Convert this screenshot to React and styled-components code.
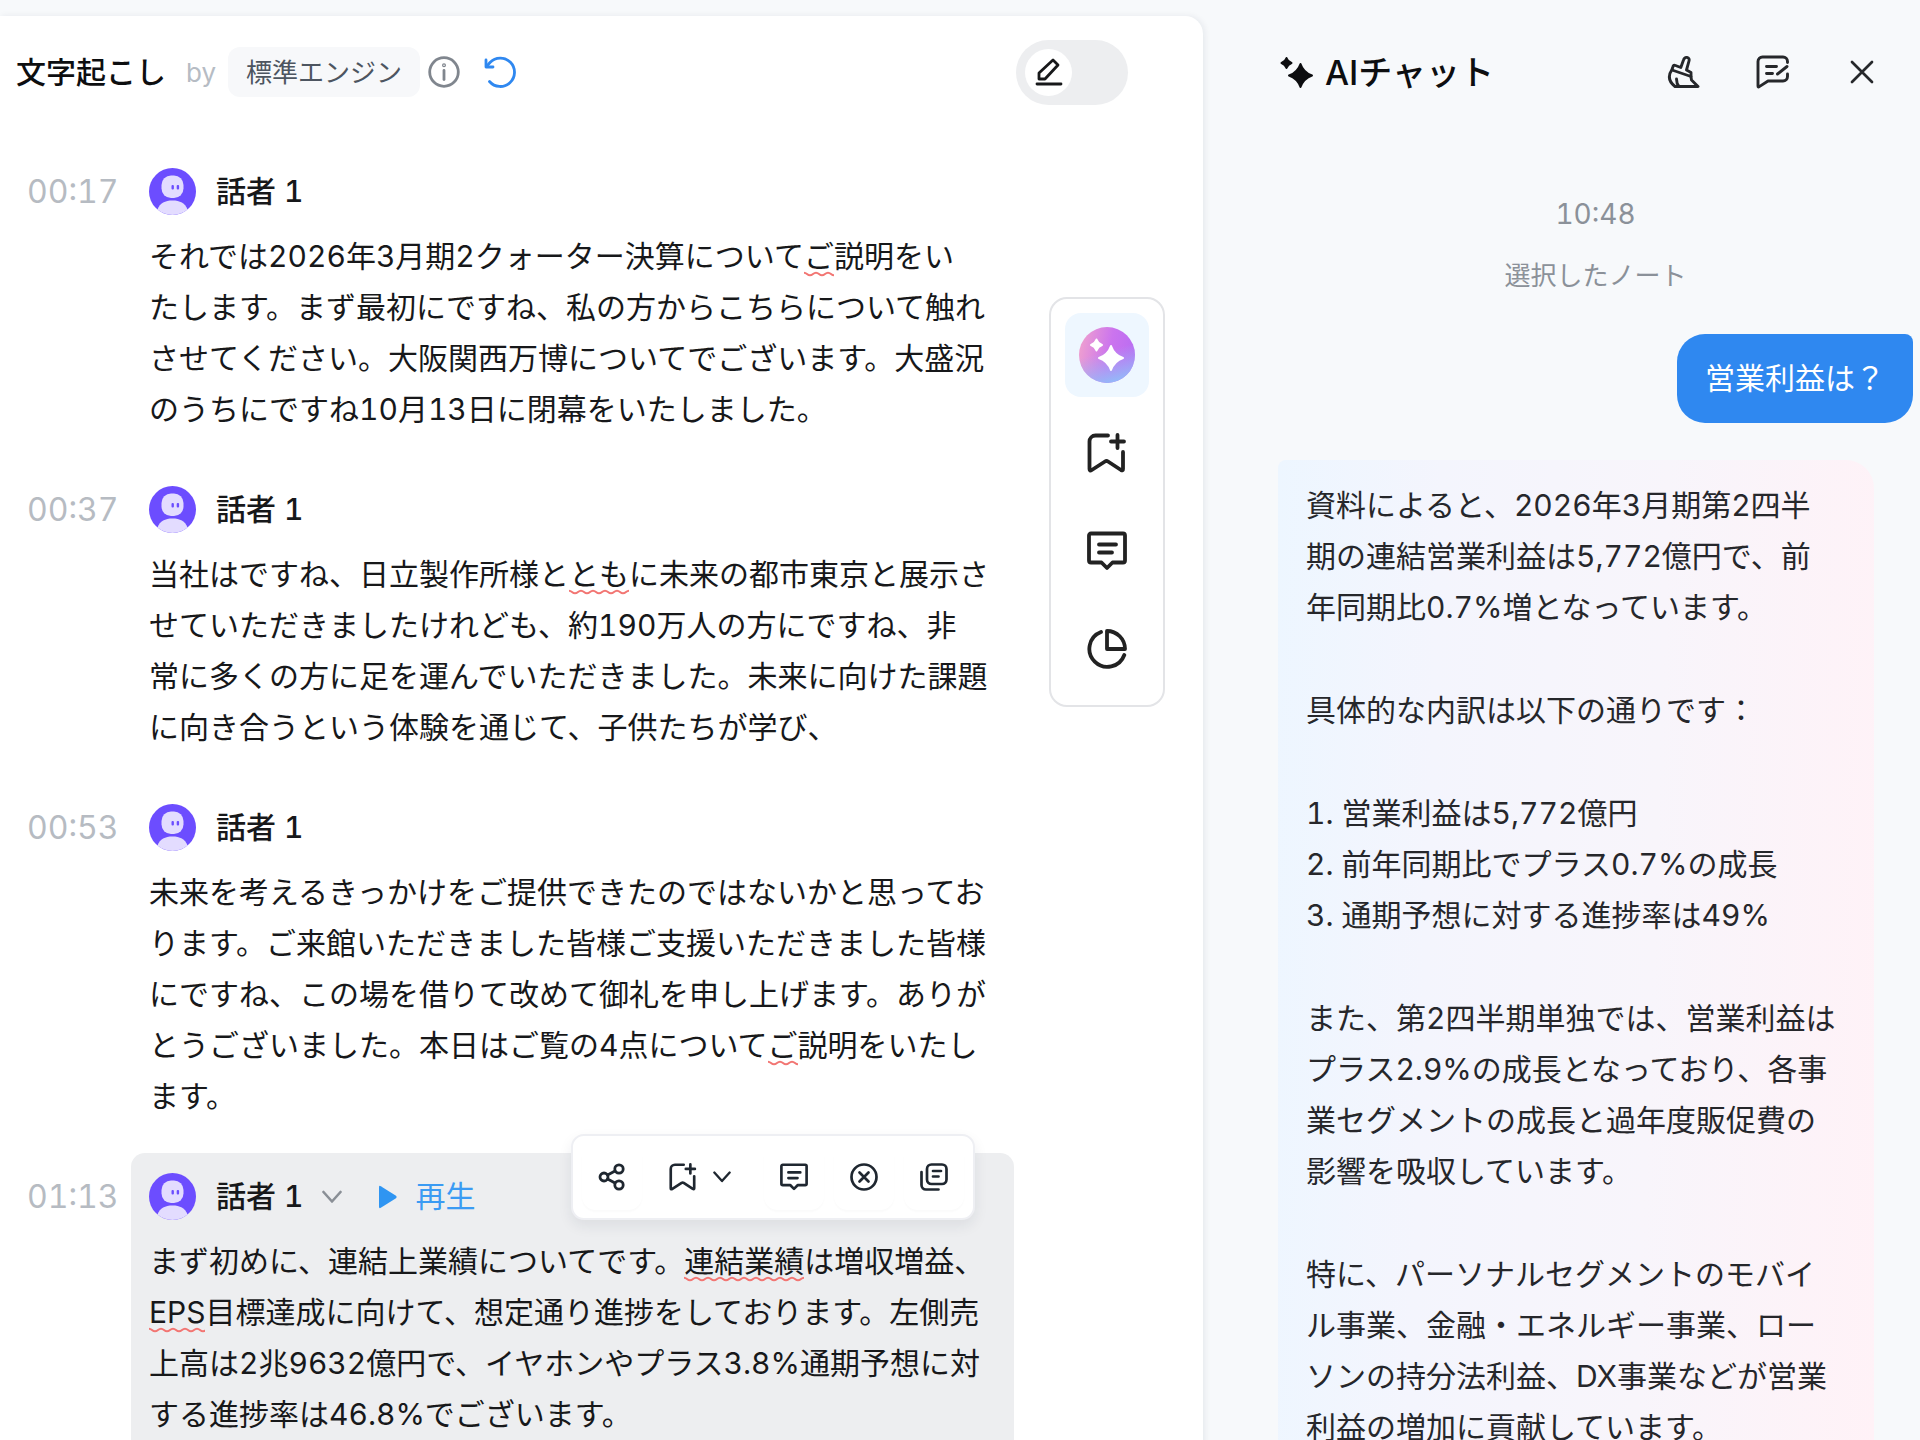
import React from "react";
import styled, { createGlobalStyle, css } from "styled-components";

const GlobalStyle = createGlobalStyle`
  *,
  *::before,
  *::after {
    box-sizing: border-box;
  }
  body {
    margin: 0;
    background: #f7f9fb;
    color: #17181a;
    font-family: Inter, "Noto Sans CJK JP", sans-serif;
    font-size: 30px;
    font-variant-numeric: tabular-nums;
    line-height: 51px;
  }
  h2,
  h3,
  p,
  ol {
    margin: 0;
    padding: 0;
  }
  button {
    display: inline-flex;
    align-items: center;
    justify-content: center;
    padding: 0;
    border: 0;
    background: none;
    color: inherit;
    font: inherit;
    cursor: pointer;
  }
  svg {
    display: block;
    flex: none;
  }
`;

const Page = styled.div`
  display: grid;
  grid-template-columns: minmax(0, 1203fr) minmax(0, 717fr);
  height: 100vh;
  overflow: hidden;
`;

/* ---------- transcript ---------- */

const Transcript = styled.main`
  margin-top: 16px;
  background: #fff;
  border-top-right-radius: 18px;
  box-shadow: 2px 0 6px rgba(20, 30, 50, 0.07);
`;

const TranscriptHeader = styled.header`
  display: flex;
  align-items: center;
  height: 112px;
  padding: 0 75px 0 16px;
`;

const Title = styled.h2`
  font-size: ${({ $large }) => ($large ? 34 : 30)}px;
  font-weight: 500;
  color: #0d0e10;
`;

const By = styled.span`
  margin: 0 12px 0 20px;
  font-size: 26px;
  color: #b6bcc4;
`;

const EngineChip = styled.button`
  && {
    height: 50px;
    padding: 0 18px;
    border-radius: 12px;
    background: #f7f8fa;
    color: #4d5560;
    font-size: 26px;
  }
`;

const HeaderIcon = styled.button`
  && {
    margin-left: ${({ $gap }) => $gap}px;
    color: ${({ $color }) => $color};
  }
`;

const EditSwitch = styled.label`
  display: flex;
  align-items: center;
  width: 112px;
  height: 65px;
  margin-left: auto;
  padding: 9px;
  border-radius: 33px;
  background: #edeef0;
  cursor: pointer;

  input {
    position: absolute;
    opacity: 0;
  }
  input:checked + span {
    margin-left: auto;
  }
`;

const Knob = styled.span`
  display: flex;
  align-items: center;
  justify-content: center;
  width: 47px;
  height: 47px;
  border-radius: 50%;
  background: #fff;
`;

const TranscriptBody = styled.div`
  display: flex;
  align-items: flex-start;
  justify-content: space-between;
  padding: 20px 38px 0 27px;
`;

const Segments = styled.div`
  display: flex;
  flex-direction: column;
  gap: 11px;
  flex: 0 1 987px;
`;

const SegmentRow = styled.article`
  display: flex;
`;

const Time = styled.time`
  flex: 0 0 104px;
  padding-top: 20px;
  font-size: 32px;
  line-height: 48px;
  color: #b6bbc2;
`;

const SegmentCard = styled.div`
  position: relative;
  flex: 1;
  min-width: 0;
  padding: 20px 0 20px 18px;
  border-radius: 14px;
  background: ${({ $active }) => ($active ? "#edeef0" : "transparent")};
`;

const SpeakerLine = styled.div`
  display: flex;
  align-items: center;
  height: 47px;
  margin-bottom: 16px;
`;

const Speaker = styled.h3`
  margin-left: 20px;
  font-size: 30px;
  font-weight: 500;
`;

const SpeakerMenu = styled.button`
  && {
    margin-left: 18px;
    color: #8a8f96;
  }
`;

const PlayButton = styled.button`
  && {
    gap: 18px;
    margin-left: 36px;
    color: #3b9bf3;
  }
`;

const SpeechLine = styled.span`
  display: block;
  white-space: pre;
`;

const Flagged = styled.mark`
  padding-bottom: 3px;
  color: inherit;
  background: url("data:image/svg+xml,%3Csvg xmlns='http://www.w3.org/2000/svg' width='12' height='6'%3E%3Cpath d='M-3 3Q0 0.500 3 3T9 3T15 3' fill='none' stroke='%23f27673' stroke-width='2'/%3E%3C/svg%3E")
    left bottom / 12px 6px repeat-x;
`;

const SegmentTools = styled.div`
  position: absolute;
  top: -19px;
  right: 39px;
  display: flex;
  gap: 10px;
  padding: 8px 9px;
  border: 2px solid #eeeff3;
  border-radius: 13px;
  background: #fff;
  color: #1f2730;
  box-shadow: 0 6px 14px rgba(30, 40, 60, 0.08);
`;

const ToolButton = styled.button`
  && {
    gap: 16px;
    width: ${({ $wide }) => ($wide ? 102 : 60)}px;
    height: 66px;
    border-radius: 14px;
    ${({ $wide }) =>
      $wide
        ? css`
            justify-content: flex-start;
            padding-left: 17px;
          `
        : css`
            box-shadow: 0 2px 2px rgba(0, 0, 0, 0.02);
          `}
  }
`;

const Rail = styled.nav`
  display: flex;
  flex-direction: column;
  gap: 14px;
  margin-top: 149px;
  padding: 14px;
  border: 2px solid #e3e4e7;
  border-radius: 18px;
  background: #fff;
`;

const RailButton = styled.button`
  && {
    width: 84px;
    height: 84px;
    border-radius: 16px;
    color: #222;
    background: ${({ $active }) => ($active ? "#eef7ff" : "transparent")};
  }
`;

/* ---------- chat ---------- */

const Chat = styled.aside`
  min-width: 0;
`;

const ChatHeader = styled.header`
  display: flex;
  align-items: center;
  gap: 11px;
  height: 128px;
  padding: 16px 36px 0 77px;
`;

const ChatActions = styled.div`
  display: flex;
  gap: 45px;
  margin-left: auto;
  color: #26282b;

  button {
    width: 44px;
    height: 44px;
  }
`;

const ChatBody = styled.div`
  display: flex;
  flex-direction: column;
  padding: 61px 7px 0 75px;
`;

const Meta = styled.p`
  margin-bottom: 10px;
  text-align: center;
  font-size: ${({ $size }) => $size}px;
  color: #8b9199;
`;

const Question = styled.p`
  align-self: flex-end;
  margin-top: 23px;
  padding: 19px 28px;
  border-radius: 28px 8px 28px 28px;
  background: #2f88f0;
  color: #fff;
`;

const Answer = styled.div`
  display: flex;
  flex-direction: column;
  gap: 52px;
  margin: 37px 39px 0 0;
  padding: 20px 28px;
  border-radius: 8px 28px 28px 28px;
  background: linear-gradient(92deg, #edf6ff 0%, #f4f5fd 26%, #f8f5fb 62%, #fff2f7 100%);
  color: #26272b;
  white-space: pre;
`;

const AnswerList = styled.ol`
  list-style: none;
`;

/* ---------- icons ---------- */

const Icon = ({ size, box = 24, width = 2, children }) => (
  <svg
    width={size}
    height={size}
    viewBox={`0 0 ${box} ${box}`}
    fill="none"
    stroke="currentColor"
    strokeWidth={width}
    strokeLinecap="round"
    strokeLinejoin="round"
    aria-hidden="true"
  >
    {children}
  </svg>
);

const InfoIcon = () => (
  <Icon size={32} box={32} width={2.8}>
    <circle cx="16" cy="16" r="14.300" />
    <path d="M16 14.500v9" />
    <circle cx="16" cy="9.200" r="0.600" />
  </Icon>
);

const RedoIcon = () => (
  <Icon size={32} box={32} width={2.8}>
    <path d="M2 4v7h7" />
    <path d="M2.500 10.500L6 6.500A14.200 14.200 0 1 1 5.500 25.500" />
  </Icon>
);

const PencilIcon = () => (
  <Icon size={30} box={30} width={2.8}>
    <path d="M19 3l5 5-13 14H5v-6z" />
    <path d="M3 27h24" />
  </Icon>
);

const BookmarkPlusIcon = ({ size, width }) => (
  <Icon size={size} box={40} width={width}>
    <path d="M21 2.500H8.500a6 6 0 0 0-6 6V36q0 2.500 2.300 1L18 28.500q1.500-1 3 0L34 37q2 1.200 2-1V19" />
    <path d="M30.500 2v13M24 8.500h13" />
  </Icon>
);

const CommentIcon = ({ size, width }) => (
  <Icon size={size} box={40} width={width}>
    <path d="M4 2.500h32a2 2 0 0 1 2 2v25a2 2 0 0 1-2 2H25.500L20 37l-5.500-5.500H4a2 2 0 0 1-2-2v-25a2 2 0 0 1 2-2z" />
    <path d="M12 13.500h17M12 21.500h13" />
  </Icon>
);

const PieIcon = () => (
  <Icon size={42} box={42} width={3.8}>
    <path d="M21 3v18h18A18 18 0 0 0 21 3z" />
    <path d="M15 4A18 18 0 1 0 38.300 27" />
  </Icon>
);

const ChevronDown = ({ size = 20 }) => (
  <svg
    width={size}
    height={14}
    viewBox="0 0 20 14"
    fill="none"
    stroke="currentColor"
    strokeWidth="2.600"
    strokeLinecap="round"
    strokeLinejoin="round"
    aria-hidden="true"
  >
    <path d="M1.500 2L10 11.500 18.500 2" />
  </svg>
);

const PlayIcon = () => (
  <svg width="20" height="24" viewBox="0 0 20 24" fill="#2f95f2" aria-hidden="true">
    <path d="M1 2.200Q1 0.200 2.800 1.200L18 10.800q1.500 1.200 0 2.400L2.800 22.800Q1 23.800 1 21.800z" />
  </svg>
);

const ShareIcon = () => (
  <Icon size={28} box={28} width={2.8}>
    <circle cx="6" cy="14" r="4" />
    <circle cx="21" cy="6" r="4.200" />
    <circle cx="21" cy="22" r="4.200" />
    <path d="M9.600 12L17 8M9.600 16L17 20" />
  </Icon>
);

const CircleCloseIcon = () => (
  <Icon size={28} box={28} width={2.7}>
    <circle cx="14" cy="14" r="12.500" />
    <path d="M9.500 9.500l9 9M18.500 9.500l-9 9" />
  </Icon>
);

const CopyIcon = () => (
  <Icon size={28} box={28} width={2.7}>
    <rect x="7" y="1.500" width="19.500" height="19.500" rx="4.500" />
    <path d="M1.500 9v13a4.500 4.500 0 0 0 4.500 4.500h12.500" />
    <path d="M13 8h8M13 13.500h5.500" />
  </Icon>
);

const BroomIcon = () => (
  <Icon size={34} box={34} width={2.9}>
    <path d="M13.800 12.500L16.500 5q1-3 3.500-2.600 2.800.6 2 3.600L19.500 15l4.500 2.500v4.500l.5 3L31 31.500H8Q-1.500 24 5 14.500l1-3Q6.500 9.800 8.500 10.500z" />
    <path d="M5 15l19 6.500" />
    <path d="M9.500 24q0 4.500 2.500 7.500" />
  </Icon>
);

const NoteIcon = () => (
  <Icon size={34} box={34} width={2.9}>
    <path d="M31.500 7.500V6.500a4.500 4.500 0 0 0-4.500-4.500H6.500A4.500 4.500 0 0 0 2 6.500V31q0 1.500 1.300.6L12 26h15a4.500 4.500 0 0 0 4.500-4.500V19" />
    <path d="M10.500 11.500h10M10.500 18.500h6M21.500 19L31 11.500" />
  </Icon>
);

const CloseIcon = () => (
  <Icon size={24} box={24} width={2.7}>
    <path d="M2 2l20 20M22 2L2 22" />
  </Icon>
);

const star = (cx, cy, r) => {
  const k = r * 0.26;
  return `M${cx} ${cy - r}Q${cx + k} ${cy - k} ${cx + r} ${cy}Q${cx + k} ${cy + k} ${cx} ${cy + r}Q${cx - k} ${cy + k} ${cx - r} ${cy}Q${cx - k} ${cy - k} ${cx} ${cy - r}z`;
};

const SparkleIcon = () => (
  <svg width="34" height="34" viewBox="0 0 34 34" fill="#0d0e10" stroke="#0d0e10" strokeWidth="2" strokeLinejoin="round" aria-hidden="true">
    <path d={star(20.5, 20.5, 11.5)} />
    <path d={star(6.5, 8, 5)} />
  </svg>
);

const AiBadge = () => (
  <svg width="56" height="56" viewBox="0 0 56 56" aria-hidden="true">
    <defs>
      <linearGradient id="badge-base" x1="0" y1="0.300" x2="1" y2="0.500">
        <stop offset="0" stopColor="#efa0cf" />
        <stop offset="0.550" stopColor="#cb74ee" />
        <stop offset="1" stopColor="#b96cf2" />
      </linearGradient>
      <linearGradient id="badge-glow" x1="0.400" y1="0.300" x2="0.600" y2="1">
        <stop offset="0.200" stopColor="#9fb4f8" stopOpacity="0" />
        <stop offset="1" stopColor="#92baf9" />
      </linearGradient>
    </defs>
    <circle cx="28" cy="28" r="28" fill="url(#badge-base)" />
    <circle cx="28" cy="28" r="28" fill="url(#badge-glow)" />
    <g fill="#fff" stroke="#fff" strokeWidth="2" strokeLinejoin="round">
      <path d={star(32, 31, 12)} />
      <path d={star(17.5, 18, 5.5)} />
    </g>
  </svg>
);

const Avatar = () => (
  <svg width="47" height="47" viewBox="0 0 47 47" aria-hidden="true">
    <circle cx="23.500" cy="23.500" r="23.500" fill="#6c4dff" />
    <rect x="12.500" y="7.500" width="22" height="22.500" rx="9.500" fill="#e3dcff" />
    <path d="M8.500 41.500C11 35 16 32.500 23.500 32.500S36 35 38.500 41.500A23.500 23.500 0 0 1 8.500 41.500z" fill="#e3dcff" />
    <rect x="22.500" y="17" width="2.400" height="4.500" rx="1" fill="#6c4dff" />
    <rect x="27.700" y="17" width="2.400" height="4.500" rx="1" fill="#6c4dff" />
  </svg>
);

/* ---------- content ---------- */

// words in [brackets] are flagged by the proofreader
const segments = [
  {
    time: "00:17",
    lines: [
      "それでは2026年3月期2クォーター決算について[ご]説明をい",
      "たします。まず最初にですね、私の方からこちらについて触れ",
      "させてください。大阪関西万博についてでございます。大盛況",
      "のうちにですね10月13日に閉幕をいたしました。",
    ],
  },
  {
    time: "00:37",
    lines: [
      "当社はですね、日立製作所様と[とも]に未来の都市東京と展示さ",
      "せていただきましたけれども、約190万人の方にですね、非",
      "常に多くの方に足を運んでいただきました。未来に向けた課題",
      "に向き合うという体験を通じて、子供たちが学び、",
    ],
  },
  {
    time: "00:53",
    lines: [
      "未来を考えるきっかけをご提供できたのではないかと思ってお",
      "ります。ご来館いただきました皆様ご支援いただきました皆様",
      "にですね、この場を借りて改めて御礼を申し上げます。ありが",
      "とうございました。本日はご覧の4点について[ご]説明をいたし",
      "ます。",
    ],
  },
  {
    time: "01:13",
    active: true,
    lines: [
      "まず初めに、連結上業績についてです。[連結業績]は増収増益、",
      "[EPS]目標達成に向けて、想定通り進捗をしております。左側売",
      "上高は2兆9632億円で、イヤホンやプラス3.8%通期予想に対",
      "する進捗率は46.8%でございます。",
    ],
  },
];

const Line = ({ text }) => (
  <SpeechLine>
    {text
      .split(/[[\]]/)
      .map((part, i) => (i % 2 ? <Flagged key={i}>{part}</Flagged> : part))}
  </SpeechLine>
);

const Segment = ({ time, lines, active }) => (
  <SegmentRow>
    <Time>{time}</Time>
    <SegmentCard $active={active}>
      <SpeakerLine>
        <Avatar />
        <Speaker>話者 1</Speaker>
        {active && (
          <>
            <SpeakerMenu aria-label="話者を変更">
              <ChevronDown />
            </SpeakerMenu>
            <PlayButton>
              <PlayIcon />
              再生
            </PlayButton>
          </>
        )}
      </SpeakerLine>
      <p>
        {lines.map((line) => (
          <Line key={line} text={line} />
        ))}
      </p>
      {active && (
        <SegmentTools>
          <ToolButton aria-label="共有">
            <ShareIcon />
          </ToolButton>
          <ToolButton $wide aria-label="ブックマーク">
            <BookmarkPlusIcon size={28} width={3.8} />
            <ChevronDown size={18} />
          </ToolButton>
          <ToolButton aria-label="コメント">
            <CommentIcon size={28} width={3.8} />
          </ToolButton>
          <ToolButton aria-label="除外">
            <CircleCloseIcon />
          </ToolButton>
          <ToolButton aria-label="コピー">
            <CopyIcon />
          </ToolButton>
        </SegmentTools>
      )}
    </SegmentCard>
  </SegmentRow>
);

const App = () => {
  return (
    <>
      <GlobalStyle />
      <Page>
        <Transcript>
          <TranscriptHeader>
            <Title>文字起こし</Title>
            <By>by</By>
            <EngineChip>標準エンジン</EngineChip>
            <HeaderIcon $gap={8} $color="#80868e" aria-label="情報">
              <InfoIcon />
            </HeaderIcon>
            <HeaderIcon $gap={24} $color="#2f88f0" aria-label="再実行">
              <RedoIcon />
            </HeaderIcon>
            <EditSwitch>
              <input type="checkbox" aria-label="編集モード" />
              <Knob>
                <PencilIcon />
              </Knob>
            </EditSwitch>
          </TranscriptHeader>
          <TranscriptBody>
            <Segments>
              {segments.map((segment) => (
                <Segment key={segment.time} {...segment} />
              ))}
            </Segments>
            <Rail>
              <RailButton $active aria-label="AIチャット">
                <AiBadge />
              </RailButton>
              <RailButton aria-label="ブックマーク">
                <BookmarkPlusIcon size={40} width={3.8} />
              </RailButton>
              <RailButton aria-label="コメント">
                <CommentIcon size={40} width={3.8} />
              </RailButton>
              <RailButton aria-label="分析">
                <PieIcon />
              </RailButton>
            </Rail>
          </TranscriptBody>
        </Transcript>

        <Chat>
          <ChatHeader>
            <SparkleIcon />
            <Title $large>AIチャット</Title>
            <ChatActions>
              <button aria-label="履歴を消去">
                <BroomIcon />
              </button>
              <button aria-label="メモ">
                <NoteIcon />
              </button>
              <button aria-label="閉じる">
                <CloseIcon />
              </button>
            </ChatActions>
          </ChatHeader>
          <ChatBody>
            <Meta $size={28}>10:48</Meta>
            <Meta $size={26}>選択したノート</Meta>
            <Question>営業利益は？</Question>
            <Answer>
              <p>{"資料によると、2026年3月期第2四半\n期の連結営業利益は5,772億円で、前\n年同期比0.7%増となっています。"}</p>
              <p>具体的な内訳は以下の通りです：</p>
              <AnswerList>
                <li>1. 営業利益は5,772億円</li>
                <li>2. 前年同期比でプラス0.7%の成長</li>
                <li>3. 通期予想に対する進捗率は49%</li>
              </AnswerList>
              <p>{"また、第2四半期単独では、営業利益は\nプラス2.9%の成長となっており、各事\n業セグメントの成長と過年度販促費の\n影響を吸収しています。"}</p>
              <p>{"特に、パーソナルセグメントのモバイ\nル事業、金融・エネルギー事業、ロー\nソンの持分法利益、DX事業などが営業\n利益の増加に貢献しています。"}</p>
            </Answer>
          </ChatBody>
        </Chat>
      </Page>
    </>
  );
};

export default App;
